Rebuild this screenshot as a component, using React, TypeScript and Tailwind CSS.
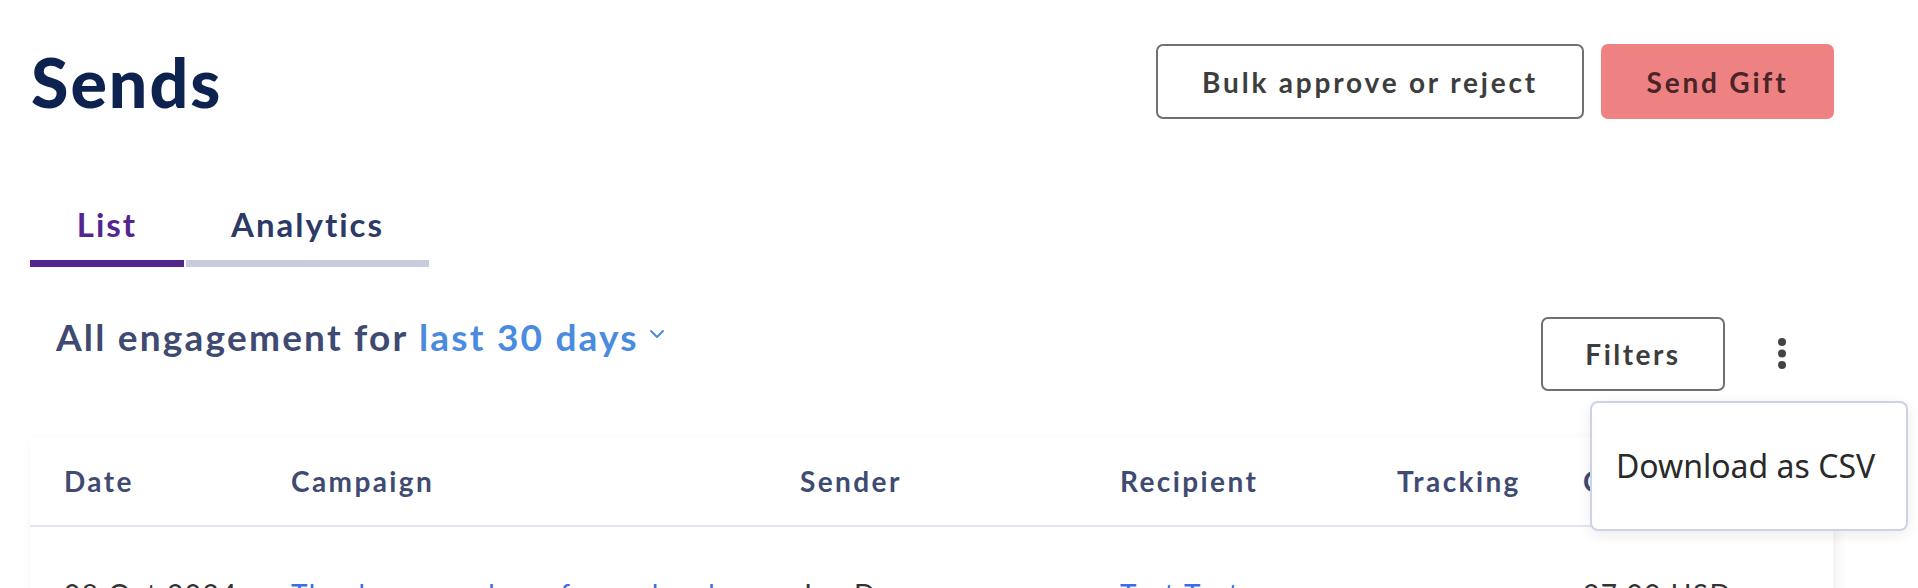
import React from 'react';

const columns = [
  { label: 'Date', width: 'w-[227px]' },
  { label: 'Campaign', width: 'w-[509px]' },
  { label: 'Sender', width: 'w-[320px]' },
  { label: 'Recipient', width: 'w-[277px]' },
  { label: 'Tracking', width: 'w-[186px]' },
  { label: 'Cost', width: 'w-[200px]' },
];

const rows = [
  {
    date: '08 Oct 2024',
    campaign: 'Thank you package for early adopters',
    sender: 'Jan Doe',
    recipient: 'Test Test',
    tracking: '',
    cost: '27.00 USD',
  },
];

const KebabIcon = () => (
  <svg width="10" height="32" viewBox="0 0 10 32" fill="#444444">
    <circle cx="5" cy="4" r="4" />
    <circle cx="5" cy="15.5" r="4" />
    <circle cx="5" cy="27" r="4" />
  </svg>
);

const Chevron = () => (
  <svg width="16" height="10" viewBox="0 0 16 10" fill="none">
    <path d="M2 2l6 6 6-6" stroke="#4A8BDF" strokeWidth="2" strokeLinecap="round" strokeLinejoin="round" />
  </svg>
);

export default function App() {
  return (
    <div className="relative w-[1918px] h-[588px] overflow-hidden bg-white font-['Lato',sans-serif]">
      {/* Page header */}
      <div className="flex items-start justify-between pl-[31px] pr-[84px] pt-[44px]">
        <h1 className="mt-[6px] text-[68px] leading-[64px] font-black text-[#0E2250] tracking-[2px]">Sends</h1>
        <div className="flex gap-[17px]">
          <button className="h-[75px] w-[428px] rounded-[7px] border-2 border-[#707070] bg-white text-[28px] font-bold tracking-[2.8px] text-[#3D3D3D]">
            Bulk approve or reject
          </button>
          <button className="h-[75px] w-[233px] rounded-[7px] bg-[#EE8283] text-[28px] font-bold tracking-[2.8px] text-[#4A2426]">
            Send Gift
          </button>
        </div>
      </div>

      {/* Tabs */}
      <div className="mt-[85px] flex gap-[2px] pl-[30px]">
        <div className="w-[154px] border-b-[7px] border-[#52258F] pb-[16px] text-center text-[33px] leading-[40px] font-bold tracking-[2px] text-[#52258F]">
          List
        </div>
        <div className="w-[243px] border-b-[7px] border-[#C8CCDD] pb-[16px] text-center text-[33px] leading-[40px] font-bold tracking-[2px] text-[#2B3A67]">
          Analytics
        </div>
      </div>

      {/* Engagement row */}
      <div className="mt-[48px] flex items-start justify-between pl-[56px] pr-[131px]">
        <div className="flex items-center gap-[10px] text-[37px] leading-[44px] font-bold tracking-[2.2px] text-[#3F4A72]">
          <span>
            All engagement for <span className="text-[#4A8BDF]">last 30 days</span>
          </span>
          <span className="mt-[-6px]">
            <Chevron />
          </span>
        </div>
        <div className="mt-[2px] flex items-center gap-[52px]">
          <button className="h-[74px] w-[184px] rounded-[7px] border-2 border-[#707070] bg-white text-[28px] font-bold tracking-[2.5px] text-[#3D3D3D]">
            Filters
          </button>
          <KebabIcon />
        </div>
      </div>

      {/* Table card */}
      <div className="ml-[30px] mt-[46px] w-[1803px] bg-white shadow-[3px_4px_12px_rgba(0,0,0,0.07)]">
        <div className="flex border-b-2 border-[#E3E5F2] pl-[34px] pt-[26px] pb-[26px]">
          {columns.map((col) => (
            <div key={col.label} className={`${col.width} shrink-0 text-[28px] leading-[36px] font-bold tracking-[2.4px] text-[#3F4B73]`}>
              {col.label}
            </div>
          ))}
        </div>
        {rows.map((row) => (
          <div key={row.date} className="flex pl-[34px] pt-[49px] pb-[40px] text-[28px] leading-[36px] tracking-[1.5px]">
            <div className="w-[227px] shrink-0 text-[#333333]">{row.date}</div>
            <div className="w-[509px] shrink-0 truncate pr-[20px] text-[#3A6EE8]">{row.campaign}</div>
            <div className="w-[320px] shrink-0 text-[#333333]">{row.sender}</div>
            <div className="w-[277px] shrink-0 text-[#3A6EE8]">{row.recipient}</div>
            <div className="w-[186px] shrink-0 text-[#333333]">{row.tracking}</div>
            <div className="w-[200px] shrink-0 text-[#333333]">{row.cost}</div>
          </div>
        ))}
      </div>

      {/* Overflow menu */}
      <div className="absolute left-[1590px] top-[401px] flex h-[130px] w-[318px] items-center rounded-[8px] border-2 border-[#CDD2E6] bg-white pl-[24px] shadow-[0_4px_14px_rgba(0,0,0,0.08)]">
        <span className="font-['Noto_Sans',sans-serif] text-[32px] leading-[40px] text-[#2A2A2A]">Download as CSV</span>
      </div>
    </div>
  );
}
